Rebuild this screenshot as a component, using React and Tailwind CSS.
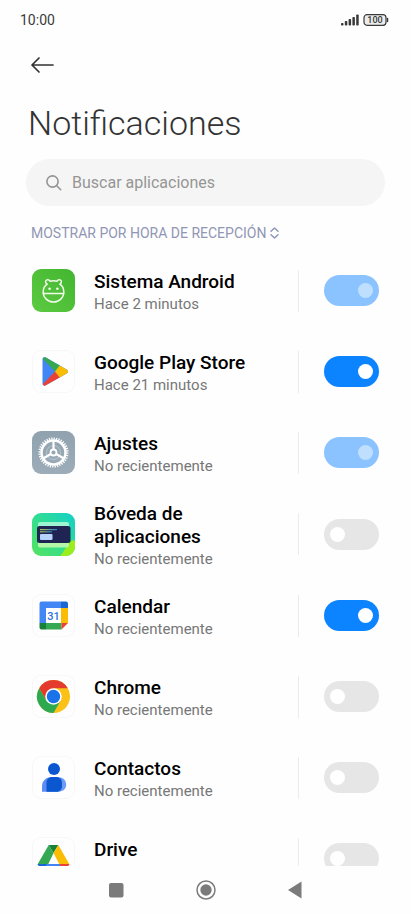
import React from "react";

function AndroidIcon() {
  return (
    <svg viewBox="0 0 43 43" className="size-full" aria-hidden="true">
      <defs>
        <linearGradient id="android-bg" x1="0" y1="1" x2="1" y2="0">
          <stop offset="0" stopColor="#5ccb42" />
          <stop offset="1" stopColor="#43b530" />
        </linearGradient>
      </defs>
      <rect width="43" height="43" rx="9" fill="url(#android-bg)" />
      <g fill="none" stroke="#f1fbe9" strokeWidth="1.5" strokeLinecap="round" strokeLinejoin="round">
        <path d="M15 15.200c-1.800-1.200-1.900-3.800-.2-4.300 1.400-.4 2.700.2 3.400 1.400 2.100-.6 4.500-.6 6.600 0 .7-1.200 2-1.800 3.400-1.400 1.700.5 1.600 3.100-.2 4.300" />
        <path d="M15 15.200c-2.700 2-3.800 5-3.800 7.800 0 5.700 4.500 10 10.300 10s10.300-4.300 10.300-10c0-2.800-1.100-5.800-3.800-7.800" />
        <path d="M11.400 24.500h20.200" />
      </g>
      <circle cx="17.600" cy="19.800" r="1.300" fill="#f1fbe9" />
      <circle cx="25.400" cy="19.800" r="1.300" fill="#f1fbe9" />
    </svg>
  );
}

function PlayIcon() {
  return (
    <svg viewBox="0 0 43 43" className="size-full" aria-hidden="true">
      <defs>
        <clipPath id="play-shape">
          <path d="M10.500 9.300c0-1.800 1.700-2.700 3.300-1.800l20.900 12c1.700 1 1.700 3 0 4L13.800 35.300c-1.600.9-3.300 0-3.300-1.800z" />
        </clipPath>
      </defs>
      <g clipPath="url(#play-shape)">
        <path d="M9 6h28v30H9z" fill="#4285f4" />
        <path d="M10.500 8.500 23 21.500 28.500 15.500 13 5z" fill="#34a853" />
        <path d="M10.500 34.500 23 21.500 28.500 27.500 13 38z" fill="#ea4335" />
        <path d="M23 21.500 28 15l11 6.500-11 6.500z" fill="#fbbc04" />
      </g>
    </svg>
  );
}

function SettingsIcon() {
  return (
    <svg viewBox="0 0 43 43" className="size-full" aria-hidden="true">
      <defs>
        <linearGradient id="settings-bg" x1="0" y1="0" x2="0" y2="1">
          <stop offset="0" stopColor="#90a2ae" />
          <stop offset="1" stopColor="#9cadb9" />
        </linearGradient>
      </defs>
      <rect width="43" height="43" rx="9" fill="url(#settings-bg)" />
      <g fill="none" stroke="#fff">
        <circle cx="21.500" cy="21.500" r="14" strokeWidth="2.200" strokeDasharray="1.250 1.182" />
        <circle cx="21.500" cy="21.500" r="12" strokeWidth="2.500" />
        <circle cx="21.500" cy="21.500" r="7" strokeWidth="1" opacity="0.3" />
        <circle cx="21.500" cy="21.500" r="3" strokeWidth="1.800" />
        <path d="M21.500 18.500V10M24.100 23l7.400 4.300M18.900 23l-7.400 4.300" strokeWidth="2.200" />
      </g>
    </svg>
  );
}

function VaultIcon() {
  return (
    <svg viewBox="0 0 43 43" className="size-full" aria-hidden="true">
      <defs>
        <linearGradient id="vault-bg" x1="0" y1="1" x2="1" y2="0">
          <stop offset="0" stopColor="#55e35c" />
          <stop offset="0.550" stopColor="#2edc98" />
          <stop offset="1" stopColor="#12cfc9" />
        </linearGradient>
        <linearGradient id="vault-line" x1="0" y1="0" x2="1" y2="0">
          <stop offset="0" stopColor="#b5c24c" />
          <stop offset="1" stopColor="#2a7fc8" />
        </linearGradient>
        <clipPath id="vault-clip">
          <rect width="43" height="43" rx="9" />
        </clipPath>
      </defs>
      <g clipPath="url(#vault-clip)">
        <path d="M0 0h43v43H0z" fill="url(#vault-bg)" />
        <path d="M28 43c4-4 6-10 10-14 2-2 3-2 5-1v15z" fill="#9bee1c" />
        <rect x="6" y="9" width="31" height="9" rx="2" fill="#9df3d2" />
        <rect x="6" y="26" width="31" height="8.500" rx="2" fill="#b4f7a8" />
        <rect x="5" y="13" width="33.500" height="17" rx="2.500" fill="#1f2452" />
        <rect x="8" y="16" width="17" height="1.200" fill="url(#vault-line)" />
        <rect x="8" y="18.200" width="12" height="1.200" fill="url(#vault-line)" />
        <rect x="8" y="21" width="12.500" height="6" rx="1" fill="#b5d3fb" />
      </g>
    </svg>
  );
}

function CalendarIcon() {
  return (
    <svg viewBox="0 0 43 43" className="size-full" aria-hidden="true">
      <path d="M9.500 7.500h19.500v6.500H14v15H7.500V9.500a2 2 0 0 1 2-2z" fill="#4285f4" />
      <path d="M29 7.500h5a2 2 0 0 1 2 2V14h-7z" fill="#1967d2" />
      <path d="M29 14h7v15h-7z" fill="#fbbc04" />
      <path d="M14 29h15.500v6.500H14z" fill="#34a853" />
      <path d="M7.500 29H14v6.500H9.500a2 2 0 0 1-2-2z" fill="#188038" />
      <path d="M29.500 29H36l-6.500 6.500z" fill="#ea4335" />
      <path d="M14 14h15v15H14z" fill="#fff" />
      <text x="21.500" y="25.500" textAnchor="middle" fill="#2f6fe0" fontFamily="Roboto, sans-serif" fontSize="11" fontWeight="500">31</text>
    </svg>
  );
}

function ChromeIcon() {
  return (
    <svg viewBox="0 0 43 43" className="size-full" aria-hidden="true">
      <circle cx="21.500" cy="21.500" r="16.500" fill="#fbc116" />
      <path d="M21.500 13.200H35.800A16.500 16.500 0 0 0 7.200 13.200L14.300 25.600z" fill="#e33b2e" />
      <path d="M7.200 13.200A16.500 16.500 0 0 0 21.500 38L28.700 25.600 14.300 25.600z" fill="#2da94f" />
      <circle cx="21.500" cy="21.500" r="8.300" fill="#fff" />
      <circle cx="21.500" cy="21.500" r="6.700" fill="#1a73e8" />
    </svg>
  );
}

function ContactsIcon() {
  return (
    <svg viewBox="0 0 43 43" className="size-full" aria-hidden="true">
      <circle cx="22" cy="12.900" r="6" fill="#0b57d0" />
      <path d="M10 35.700V30.500c0-5.500 4-9.400 9.500-9.400H26v14.600z" fill="#5c8df6" />
      <path d="M19.500 21.100h6c5 0 8.700 3 8.700 7.600s-3.700 7-8.700 7h-6z" fill="#6f9bf8" />
      <path d="M14.500 35.700V27.300c0-4 2.500-6.200 6-6.200H24c3.500 0 6 2.200 6 5.700v3.400c0 3.500-2.500 5.500-6 5.500z" fill="#0b57d0" />
    </svg>
  );
}

function DriveIcon() {
  return (
    <svg viewBox="0 0 43 43" className="size-full" aria-hidden="true">
      <path d="M16.700 8h9.600l-4.800 8z" fill="#188038" />
      <path d="M16.700 8l4.900 8-5.600 11.500H5.500z" fill="#34a853" />
      <path d="M26.300 8l11.200 19.500H27.500L21.500 16z" fill="#fbbc04" />
      <path d="M5.500 27h10.200L11 34.500c-1 0-1.600-.5-2-1.200z" fill="#1967d2" />
      <path d="M14.800 27h13.400l4 7.500H11z" fill="#4285f4" />
      <path d="M27.300 27h10.200L34 33.300c-.4.700-1 1.200-2 1.200z" fill="#ea4335" />
    </svg>
  );
}

const apps = [
  { id: "android", name: "Sistema Android", when: "Hace 2 minutos", Icon: AndroidIcon, on: true, locked: true },
  { id: "play", name: "Google Play Store", when: "Hace 21 minutos", Icon: PlayIcon, on: true, framed: true },
  { id: "settings", name: "Ajustes", when: "No recientemente", Icon: SettingsIcon, on: true, locked: true },
  { id: "vault", name: "Bóveda de aplicaciones", when: "No recientemente", Icon: VaultIcon, on: false },
  { id: "calendar", name: "Calendar", when: "No recientemente", Icon: CalendarIcon, on: true, framed: true },
  { id: "chrome", name: "Chrome", when: "No recientemente", Icon: ChromeIcon, on: false, framed: true },
  { id: "contacts", name: "Contactos", when: "No recientemente", Icon: ContactsIcon, on: false, framed: true },
  { id: "drive", name: "Drive", when: "", Icon: DriveIcon, on: false, framed: true },
];

function StatusBar() {
  return (
    <div className="flex h-10 shrink-0 items-center justify-between pl-5 pr-[22px] text-[#3a3a3a]">
      <span className="text-[14px]">10:00</span>
      <div className="flex items-center gap-1">
        <svg viewBox="0 0 18 12" className="h-3 w-[18px]" fill="currentColor" aria-hidden="true">
          <rect x="0" y="9" width="2.500" height="2.500" rx="0.800" />
          <rect x="3.800" y="7" width="2.500" height="4.500" rx="0.800" />
          <rect x="7.600" y="5" width="2.500" height="6.500" rx="0.800" />
          <rect x="11.400" y="3" width="2.500" height="8.500" rx="0.800" />
          <rect x="15.200" y="0.500" width="2.500" height="11" rx="0.800" />
        </svg>
        <svg viewBox="0 0 26 12" className="h-3 w-[26px]" role="img" aria-label="Batería 100">
          <rect x="1" y="0.700" width="22" height="10.600" rx="3" fill="#ececec" stroke="#3a3a3a" strokeWidth="1.200" />
          <path d="M24.500 4.500v3" stroke="#3a3a3a" strokeWidth="1.500" strokeLinecap="round" />
          <text x="12" y="9" textAnchor="middle" fill="#3a3a3a" fontFamily="Roboto, sans-serif" fontSize="9" fontWeight="500">100</text>
        </svg>
      </div>
    </div>
  );
}

function AppRow({ app }) {
  const { id, name, when, Icon, on, locked, framed } = app;
  return (
    <li className="flex min-h-[81px] items-center px-8">
      <div className={framed ? "size-[43px] shrink-0 rounded-[9px] ring-1 ring-inset ring-[#f7f7f7]" : "size-[43px] shrink-0"}>
        <Icon />
      </div>
      <div className="ml-[19px] min-w-0 flex-1 pt-[9px] pb-1 pr-10">
        <label htmlFor={id} className="block text-[19px] leading-[23px] font-medium text-black">
          {name}
        </label>
        <p className="min-h-[23px] text-[15px] leading-[23px] text-[#777]">{when}</p>
      </div>
      <div className="h-[42px] w-px shrink-0 bg-[#ececec]" />
      <input
        id={id}
        type="checkbox"
        role="switch"
        defaultChecked={on}
        disabled={locked}
        className="ml-[25px] flex h-[31px] w-[55px] shrink-0 appearance-none items-center rounded-full bg-[#e6e6e6] px-[6px] before:size-[15px] before:rounded-full before:bg-white before:content-[''] checked:justify-end checked:bg-[#0d84ff] disabled:bg-[#8ac3ff] disabled:before:bg-[#bfdfff]"
      />
    </li>
  );
}

export default function App() {
  return (
    <div className="flex h-screen flex-col overflow-hidden bg-[#fefefe] font-['Roboto',sans-serif]">
      <StatusBar />
      <header className="shrink-0 px-[26px]">
        <button type="button" aria-label="Atrás" className="flex h-[50px] items-center pl-1 text-[#333]">
          <svg viewBox="0 0 24 18" className="h-[18px] w-6" fill="none" stroke="currentColor" strokeWidth="1.700" strokeLinecap="round" strokeLinejoin="round" aria-hidden="true">
            <path d="M2 9h21M9 2 2 9l7 7" />
          </svg>
        </button>
        <h1 className="pt-3 pl-[2px] text-[34px] leading-[42px] font-light text-[#333]">Notificaciones</h1>
        <label className="mt-[15px] flex h-[47px] items-center gap-[10px] rounded-full bg-[#f5f5f5] pl-5 text-[#959595]">
          <svg viewBox="0 0 16 16" className="size-4 shrink-0" fill="none" stroke="currentColor" strokeWidth="1.600" strokeLinecap="round" aria-hidden="true">
            <circle cx="6.500" cy="6.500" r="5.600" />
            <path d="m10.700 10.700 4 4" />
          </svg>
          <input
            type="text"
            aria-label="Buscar aplicaciones"
            placeholder="Buscar aplicaciones"
            className="min-w-0 flex-1 bg-transparent text-[16px] outline-none placeholder:text-[#959595]"
          />
        </label>
        <button type="button" className="flex h-11 items-center gap-1 pt-[10px] pl-[5px] text-[14px] text-[#9096b4]">
          <span>MOSTRAR POR HORA DE RECEPCIÓN</span>
          <svg viewBox="0 0 9 12" className="h-3 w-[9px]" fill="none" stroke="currentColor" strokeWidth="1.500" strokeLinecap="round" strokeLinejoin="round" aria-hidden="true">
            <path d="M1 4.300 4.500 1 8 4.300M1 7.700 4.500 11 8 7.700" />
          </svg>
        </button>
      </header>
      <main className="min-h-0 flex-1 overflow-hidden">
        <ul>
          {apps.map((app) => (
            <AppRow key={app.id} app={app} />
          ))}
        </ul>
      </main>
      <nav className="flex h-12 shrink-0 items-center justify-center gap-[70px] text-[#7b7b7b]">
        <button type="button" aria-label="Recientes" className="size-5">
          <svg viewBox="0 0 20 20" className="size-5" fill="currentColor" aria-hidden="true">
            <rect x="3" y="3" width="14.500" height="14.500" rx="2" />
          </svg>
        </button>
        <button type="button" aria-label="Inicio" className="size-5">
          <svg viewBox="0 0 20 20" className="size-5" aria-hidden="true">
            <circle cx="10" cy="10" r="9" fill="none" stroke="currentColor" strokeWidth="1.500" />
            <circle cx="10" cy="10" r="5.700" fill="currentColor" />
          </svg>
        </button>
        <button type="button" aria-label="Volver" className="size-5">
          <svg viewBox="0 0 20 20" className="size-5" fill="currentColor" aria-hidden="true">
            <path d="M2 10 15.500 1.500v17z" />
          </svg>
        </button>
      </nav>
    </div>
  );
}
